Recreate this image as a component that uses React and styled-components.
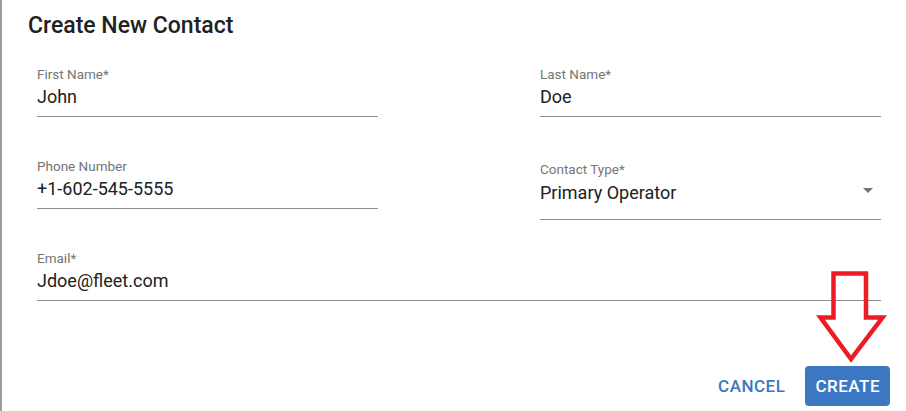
import React from "react";
import styled, { createGlobalStyle } from "styled-components";

const GlobalStyle = createGlobalStyle`
  html, body {
    margin: 0;
    padding: 0;
    background: #ffffff;
  }
  body {
    font-family: Roboto, "Liberation Sans", Arial, sans-serif;
  }
`;

const Dialog = styled.div`
  position: relative;
  box-sizing: border-box;
  width: 906px;
  height: 411px;
  display: flex;
  flex-direction: column;
  border-left: 2px solid #9c9c9c;
  background: #fff;
  overflow: hidden;
`;

const Title = styled.h2`
  margin: 0;
  padding: 10px 0 0 26px;
  font-size: 23px;
  line-height: 32px;
  font-weight: 500;
  color: #212121;
`;

const Form = styled.div`
  display: grid;
  grid-template-columns: 341px 341px;
  grid-template-rows: repeat(3, 50px);
  column-gap: 162px;
  row-gap: 42px;
  margin-top: 24px;
  padding: 0 25px 0 35px;
`;

const Field = styled.div`
  display: flex;
  flex-direction: column;
  align-self: start;
  grid-column: ${(p) => (p.$wide ? "1 / span 2" : "auto")};
  padding-top: ${(p) => (p.$select ? "3px" : "0")};
`;

const Label = styled.label`
  font-size: 13.5px;
  line-height: 16px;
  color: #757575;
`;

const Value = styled.div`
  display: flex;
  align-items: center;
  justify-content: space-between;
  margin-top: ${(p) => (p.$select ? "4px" : "3px")};
  padding-bottom: ${(p) => (p.$select ? "14px" : "7px")};
  font-size: 18px;
  line-height: 24px;
  color: #212121;
  border-bottom: 1px solid #8e8e8e;
`;

const Caret = styled.svg`
  width: 10px;
  height: 5px;
  margin-right: 8px;
  transform: translateY(-3px);
  fill: #757575;
`;

const Actions = styled.div`
  display: flex;
  justify-content: flex-end;
  align-items: center;
  gap: 10px;
  margin-top: auto;
  padding: 0 16px 5px 0;
`;

const Button = styled.button`
  height: 40px;
  padding: 0 10px;
  border: none;
  border-radius: 4px;
  font-family: Roboto, "Liberation Sans", Arial, sans-serif;
  font-size: 17px;
  font-weight: 500;
  letter-spacing: 0.5px;
  text-transform: uppercase;
  background: ${(p) => (p.$primary ? "#3b77c3" : "transparent")};
  color: ${(p) => (p.$primary ? "#ffffff" : "#3b77c3")};
  cursor: pointer;
`;

const Annotation = styled.svg`
  position: absolute;
  left: 0;
  top: 0;
  width: 906px;
  height: 411px;
  pointer-events: none;
`;

const TextField = ({ label, value, wide, select }) => (
  <Field $wide={wide} $select={select}>
    <Label>{label}</Label>
    <Value $select={select}>
      <span>{value}</span>
      {select && (
        <Caret viewBox="0 0 10 5">
          <path d="M0 0h10L5 5z" />
        </Caret>
      )}
    </Value>
  </Field>
);

export default function App() {
  return (
    <Dialog>
      <GlobalStyle />
      <Title>Create New Contact</Title>
      <Form>
        <TextField label="First Name*" value="John" />
        <TextField label="Last Name*" value="Doe" />
        <TextField label="Phone Number" value="+1-602-545-5555" />
        <TextField label="Contact Type*" value="Primary Operator" select />
        <TextField label="Email*" value="Jdoe@fleet.com" wide />
      </Form>
      <Actions>
        <Button>Cancel</Button>
        <Button $primary>Create</Button>
      </Actions>
      <Annotation viewBox="0 0 906 411">
        <polygon
          points="831.5,273.5 864,273.5 864,317.5 880.5,317.5 849,359 818.5,317.5 831.5,317.5"
          fill="none"
          stroke="#ed1c24"
          strokeWidth="4.5"
          strokeLinejoin="miter"
        />
      </Annotation>
    </Dialog>
  );
}
